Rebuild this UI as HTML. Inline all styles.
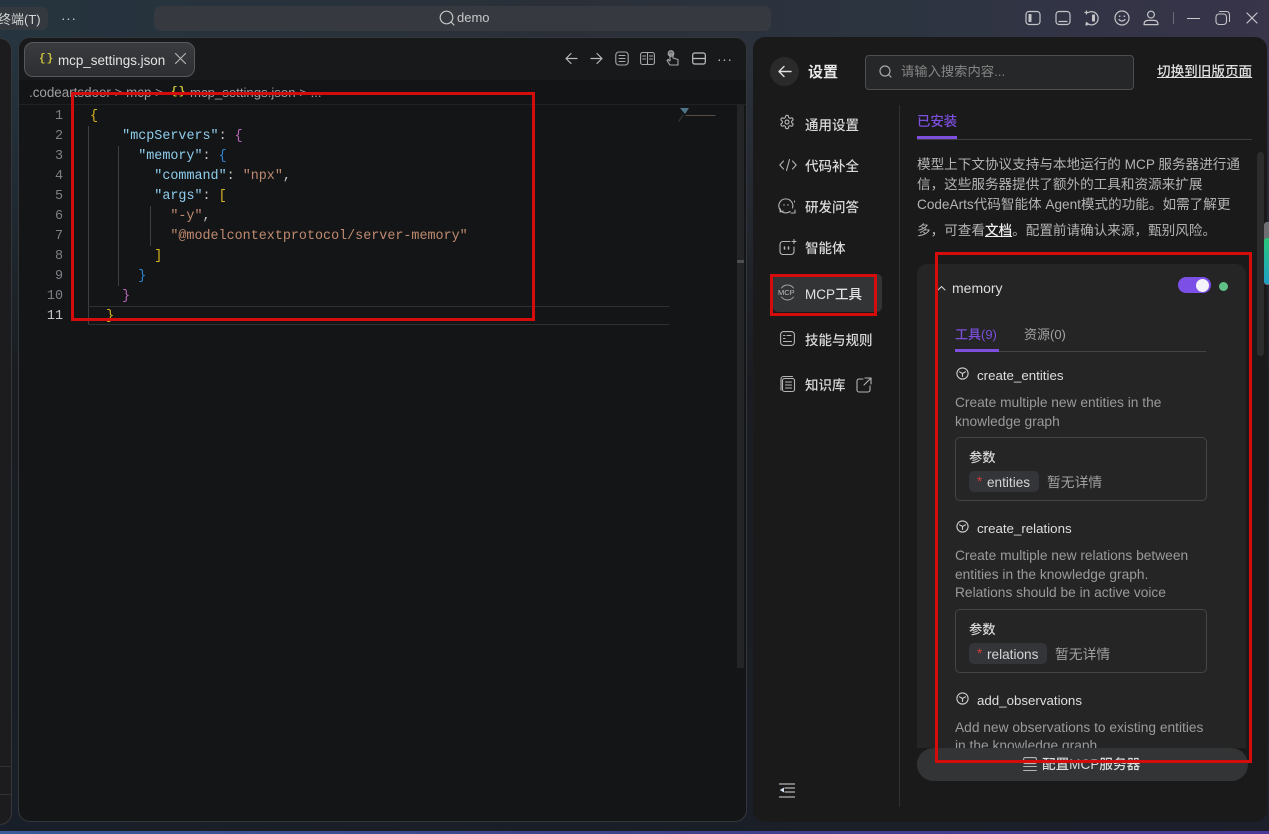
<!DOCTYPE html>
<html lang="zh">
<head>
<meta charset="utf-8">
<title>mcp_settings.json</title>
<style>
html,body{margin:0;padding:0;width:1269px;height:834px;overflow:hidden;background:#1a1c20}
body{position:relative;font-family:"Liberation Sans","Noto Sans CJK SC",sans-serif;color:#d0d0d0}
.a{position:absolute;white-space:nowrap}
svg{position:absolute;overflow:visible;fill:none;stroke-linecap:round;stroke-linejoin:round}
#bg{position:absolute;left:0;top:0;width:1269px;height:834px;background:linear-gradient(180deg,rgba(20,21,24,0) 0%,rgba(20,21,24,0) 6%,rgba(22,23,26,.8) 45%,rgba(22,26,34,.8) 100%),linear-gradient(90deg,#25343f 0%,#2b3038 45%,#2c3440 70%,#38344a 100%)}
#strip{position:absolute;left:0;top:831px;width:1269px;height:3px;background:linear-gradient(90deg,#3a5c98 0%,#3d4488 45%,#4c3a98 100%)}
#leftp{position:absolute;left:-20px;top:38px;width:30px;height:785px;background:#1c1c1e;border:1px solid #33363a;border-radius:12px}
#editor{position:absolute;left:18px;top:37px;width:729px;height:785px;background:#141517;border:1px solid #33363a;border-radius:12px;overflow:hidden;box-sizing:border-box}
#tabbar{position:absolute;left:0;top:0;width:729px;height:42px;background:#18191b}
#crumb{position:absolute;left:0;top:42px;width:729px;height:25px;background:#131416;border-bottom:1px solid #1f2124;box-sizing:border-box}
#tab{position:absolute;left:24px;top:42px;width:169px;height:33px;background:linear-gradient(180deg,#3a3b3e,#2d2e31);border:1px solid #56585b;border-radius:9px}
#set{position:absolute;left:753px;top:37px;width:514px;height:785px;background:#1a1a1b;border-radius:12px;overflow:hidden}
.code{position:absolute;left:90px;font:13.4px/20px "Liberation Mono",monospace;white-space:pre;color:#c4c4c4;margin-top:2px}
.ln{position:absolute;left:30px;width:33px;text-align:right;font:13.4px/20px "Liberation Mono",monospace;color:#7d8084;margin-top:2px}
.k{color:#8fcdec}.s{color:#c08a70}.y{color:#d8b420}.p{color:#b866ba}.b{color:#2f86d0}
.guide{position:absolute;width:1px;background:#3d3f42}
.nav{position:absolute;left:805px;font-size:13.5px;font-weight:500;color:#d8d8d8;line-height:18px;white-space:nowrap;margin-top:1px}
.desc{position:absolute;left:917px;font-size:13.6px;color:#b3b3b3;white-space:nowrap;line-height:20px;margin-top:1px}
.tn{position:absolute;left:977px;font-size:13.3px;color:#dedede;line-height:18px;white-space:nowrap;margin-top:1px}
.td{position:absolute;left:955px;font-size:13.75px;color:#9a9a9a;line-height:18px;white-space:nowrap;margin-top:1px}
.box{position:absolute;left:955px;width:250px;height:62px;border:1px solid #444547;border-radius:5px}
.pl{position:absolute;left:969px;font-size:13.3px;font-weight:500;color:#d5d5d5;line-height:18px;margin-top:1px}
.chip{position:absolute;left:969px;height:21px;background:#343538;border-radius:5px;font-size:13.6px;line-height:23px;color:#d5d5d5;box-sizing:border-box;padding-left:18px}
.chip i{position:absolute;left:8px;top:-1px;font-style:normal;color:#d33c3c}
.none{position:absolute;font-size:13.8px;color:#a0a0a0;line-height:18px;margin-top:1px}
.red{position:absolute;border:3px solid #d40c0c;box-sizing:border-box}
</style>
</head>
<body>
<div id="bg"></div>
<div id="strip"></div>

<!-- top bar -->
<div class="a" style="left:0;top:7px;width:48px;height:23px;background:#33393f;border-radius:0 6px 6px 0"></div>
<div class="a" style="left:-2px;top:10px;font-size:13px;line-height:18px;color:#d5d5d5;margin-top:1px">终端(T)</div>
<div class="a" style="left:61px;top:9px;font-size:14px;line-height:18px;color:#c8c8c8;letter-spacing:.5px">···</div>
<div class="a" style="left:154px;top:6px;width:617px;height:25px;background:#363a40;border-radius:7px"></div>
<svg style="left:439px;top:10px" width="18" height="18" stroke="#c4c4c4" stroke-width="1.2"><circle cx="7.5" cy="7.5" r="6.3"/><path d="M12 12l3 3"/></svg>
<div class="a" style="left:457px;top:9px;font-size:13px;line-height:18px;color:#c8c8c8">demo</div>

<svg style="left:1025px;top:10px" width="16" height="16" stroke="#c4c4c8" stroke-width="1.2"><rect x="1" y="1.5" width="14" height="13" rx="3"/><rect x="3.5" y="4" width="3" height="8" rx=".6" fill="#c4c4c8" stroke="none"/></svg>
<svg style="left:1055px;top:10px" width="16" height="16" stroke="#c4c4c8" stroke-width="1.2"><rect x="1" y="1.5" width="14" height="13" rx="3"/><path d="M4 11.5h8"/></svg>
<svg style="left:1084px;top:10px" width="16" height="16" stroke="#c4c4c8" stroke-width="1.2"><path d="M5 2.2a6.6 6.6 0 1 1-2.5 10.3L2 15l2.6-.8"/><path d="M1 2.5h3M2.5 1v3"/><rect x="8" y="4.5" width="3" height="7" rx=".6" fill="#c4c4c8" stroke="none"/></svg>
<svg style="left:1114px;top:10px" width="16" height="16" stroke="#c4c4c8" stroke-width="1.2"><circle cx="8" cy="8" r="7"/><path d="M5 9.5c1.5 2 4.5 2 6 0"/><circle cx="5.7" cy="6.2" r=".8" fill="#c4c4c8" stroke="none"/><circle cx="10.3" cy="6.2" r=".8" fill="#c4c4c8" stroke="none"/></svg>
<svg style="left:1143px;top:10px" width="16" height="16" stroke="#c4c4c8" stroke-width="1.2"><circle cx="8" cy="4.6" r="3.4"/><path d="M1 14.6c0-3 1.8-4.2 4-4.2h6c2.2 0 4 1.2 4 4.2z"/></svg>
<div class="a" style="left:1173px;top:12px;width:1px;height:12px;background:#6a6c74"></div>
<div class="a" style="left:1187px;top:18px;width:13px;height:1px;background:#c8c8cc"></div>
<svg style="left:1215px;top:10px" width="16" height="16" stroke="#c4c4c8" stroke-width="1.1"><rect x="1" y="4" width="10.5" height="10.5" rx="3"/><path d="M4.5 1.5h7a3 3 0 0 1 3 3v7"/></svg>
<svg style="left:1246px;top:12px" width="12" height="12" stroke="#c8c8cc" stroke-width="1.2"><path d="M1 1l10 10M11 1L1 11"/></svg>

<div id="leftp"></div>
<div class="a" style="left:0;top:766px;width:11px;height:1px;background:#2e3033"></div>
<div class="a" style="left:0;top:794px;width:11px;height:1px;background:#2e3033"></div>

<!-- editor -->
<div id="editor">
  <div id="tabbar"></div>
  <div id="crumb"></div>
</div>
<div id="tab"></div>
<div class="a" style="left:39px;top:52px;font:700 11px/15px 'Liberation Mono',monospace;color:#c8c03a;letter-spacing:1px">{}</div>
<div class="a" style="left:58px;top:52px;font-size:13.4px;line-height:18px;color:#e2e2e2">mcp_settings.json</div>
<svg style="left:175px;top:53px" width="11" height="11" stroke="#b8b8b8" stroke-width="1.1"><path d="M.5.5l10 10M10.5.5l-10 10"/></svg>

<svg style="left:565px;top:52px" width="13" height="13" stroke="#b8b8b8" stroke-width="1.2"><path d="M12 6.5H1M6 1.5l-5 5 5 5"/></svg>
<svg style="left:590px;top:52px" width="13" height="13" stroke="#b8b8b8" stroke-width="1.2"><path d="M1 6.5h11M7 1.5l5 5-5 5"/></svg>
<svg style="left:615px;top:51px" width="14" height="15" stroke="#a8a8a8" stroke-width="1.1"><rect x=".8" y="1" width="12.4" height="13" rx="3"/><path d="M4 4.5h6M4 7.5h6M4 10.5h6"/></svg>
<svg style="left:640px;top:51px" width="15" height="15" stroke="#a8a8a8" stroke-width="1.1"><rect x=".6" y="1.5" width="13.8" height="12" rx="2"/><path d="M7.5 1.5v12M2.8 5h2.7M2.8 8h2.7M9.500 5h3M9.500 8h3"/></svg>
<svg style="left:666px;top:50px" width="14" height="16" stroke="#a8a8a8" stroke-width="1.1"><circle cx="5" cy="3.5" r="2.8" fill="#6b6d70"/><path d="M4 4v7L2 9.500 1 10.500l3 4.500h8V9.500L7 8V4z"/></svg>
<svg style="left:692px;top:52px" width="14" height="13" stroke="#c0c0c0" stroke-width="1.2"><rect x=".7" y="1" width="12.6" height="11" rx="2"/><path d="M1 6.500h12"/></svg>
<div class="a" style="left:717px;top:50px;font-size:14px;line-height:18px;color:#b8b8b8;letter-spacing:.5px">···</div>

<div class="a" style="left:29px;top:84px;font-size:13.4px;line-height:18px;color:#9f9f9f">.codeartsdoer &gt; mcp &gt;</div>
<div class="a" style="left:171px;top:85px;font:700 11px/15px 'Liberation Mono',monospace;color:#c8c03a;letter-spacing:1px">{}</div>
<div class="a" style="left:190px;top:84px;font-size:13.2px;line-height:18px;color:#9f9f9f">mcp_settings.json &gt; ...</div>

<div class="ln" style="top:105px">1</div><div class="ln" style="top:125px">2</div><div class="ln" style="top:145px">3</div><div class="ln" style="top:165px">4</div><div class="ln" style="top:185px">5</div><div class="ln" style="top:205px">6</div><div class="ln" style="top:225px">7</div><div class="ln" style="top:245px">8</div><div class="ln" style="top:265px">9</div><div class="ln" style="top:285px">10</div><div class="ln" style="top:305px;color:#c6c6c6">11</div>

<div class="guide" style="left:88px;top:126px;height:199px"></div>
<div class="guide" style="left:118px;top:146px;height:140px"></div>
<div class="guide" style="left:150px;top:206px;height:40px"></div>
<div class="a" style="left:88px;top:306px;width:581px;height:1px;background:#2e3033"></div>
<div class="a" style="left:88px;top:324px;width:581px;height:1px;background:#2e3033"></div>

<div class="code" style="top:105px"><span class="y">{</span></div>
<div class="code" style="top:125px">    <span class="k">"mcpServers"</span>: <span class="p">{</span></div>
<div class="code" style="top:145px">      <span class="k">"memory"</span>: <span class="b">{</span></div>
<div class="code" style="top:165px">        <span class="k">"command"</span>: <span class="s">"npx"</span>,</div>
<div class="code" style="top:185px">        <span class="k">"args"</span>: <span class="y">[</span></div>
<div class="code" style="top:205px">          <span class="s">"-y"</span>,</div>
<div class="code" style="top:225px">          <span class="s">"@modelcontextprotocol/server-memory"</span></div>
<div class="code" style="top:245px">        <span class="y">]</span></div>
<div class="code" style="top:265px">      <span class="b">}</span></div>
<div class="code" style="top:285px">    <span class="p">}</span></div>
<div class="code" style="top:305px">  <span class="y">}</span></div>

<!-- minimap and scrollbar -->
<svg style="left:676px;top:105px" width="42" height="20" stroke="none"><path d="M4 3h9l-4 6z" fill="#4f7488"/><path d="M10 10.500h29" stroke="#5b4d46" stroke-width="1"/><path d="M7 10l-4 6" stroke="#3a3c3e" stroke-width="1"/></svg>
<div class="a" style="left:737px;top:105px;width:7px;height:563px;background:#242527"></div>
<div class="a" style="left:737px;top:260px;width:7px;height:3px;background:#4d4e50"></div>

<!-- settings -->
<div id="set"></div>
<div class="a" style="left:770px;top:57px;width:29px;height:29px;border-radius:50%;background:#2a2a2b"></div>
<svg style="left:778px;top:65px" width="14" height="13" stroke="#e0e0e0" stroke-width="1.4"><path d="M13 6.500H1M6 1.500l-5 5 5 5"/></svg>
<div class="a" style="left:808px;top:62px;font-size:15px;font-weight:700;line-height:20px;color:#e8e8e8;margin-top:1px">设置</div>
<div class="a" style="left:865px;top:55px;width:267px;height:33px;background:#262728;border:1px solid #4d4e50;border-radius:4px"></div>
<svg style="left:879px;top:65px" width="13" height="13" stroke="#a8a8a8" stroke-width="1.2"><circle cx="6" cy="6" r="5"/><path d="M9.500 9.500l2.500 2.500"/></svg>
<div class="a" style="left:901px;top:63px;font-size:13.3px;line-height:18px;color:#858585">请输入搜索内容...</div>
<div class="a" style="left:1157px;top:63px;font-size:13.6px;font-weight:500;line-height:18px;color:#e0e0e0;text-decoration:underline">切换到旧版页面</div>

<div class="a" style="left:899px;top:105px;width:1px;height:702px;background:#303133"></div>

<!-- nav -->
<svg style="left:779px;top:114px" width="16" height="16" viewBox="0 0 24 24" stroke="#b5b5b5" stroke-width="1.700"><path d="M12.220 2h-.44a2 2 0 0 0-2 2v.18a2 2 0 0 1-1 1.730l-.43.25a2 2 0 0 1-2 0l-.15-.08a2 2 0 0 0-2.730.73l-.22.38a2 2 0 0 0 .73 2.730l.15.1a2 2 0 0 1 1 1.720v.51a2 2 0 0 1-1 1.740l-.15.09a2 2 0 0 0-.73 2.730l.22.38a2 2 0 0 0 2.730.73l.15-.08a2 2 0 0 1 2 0l.43.25a2 2 0 0 1 1 1.730V20a2 2 0 0 0 2 2h.44a2 2 0 0 0 2-2v-.18a2 2 0 0 1 1-1.730l.43-.25a2 2 0 0 1 2 0l.15.08a2 2 0 0 0 2.730-.73l.22-.39a2 2 0 0 0-.73-2.730l-.15-.08a2 2 0 0 1-1-1.740v-.5a2 2 0 0 1 1-1.740l.15-.09a2 2 0 0 0 .73-2.730l-.22-.38a2 2 0 0 0-2.730-.73l-.15.08a2 2 0 0 1-2 0l-.43-.25a2 2 0 0 1-1-1.730V4a2 2 0 0 0-2-2z"/><circle cx="12" cy="12" r="3"/></svg>
<div class="nav" style="top:116px">通用设置</div>
<svg style="left:779px;top:158px" width="18" height="14" stroke="#b5b5b5" stroke-width="1.100"><path d="M4.500 3L.8 7l3.700 4M13.500 3l3.700 4-3.700 4M10.500 1.500L7.500 12.500"/></svg>
<div class="nav" style="top:157px">代码补全</div>
<svg style="left:778px;top:197px" width="19" height="18" stroke="#b5b5b5" stroke-width="1.100"><path d="M14.500 11a7 7 0 1 0-2.500 3.500"/><path d="M2.500 12L2 15l3-1M16.500 4v1M17 13v3h-4"/><circle cx="6" cy="8" r=".7" fill="#b5b5b5" stroke="none"/><circle cx="10" cy="8" r=".7" fill="#b5b5b5" stroke="none"/></svg>
<div class="nav" style="top:198px">研发问答</div>
<svg style="left:779px;top:239px" width="18" height="17" stroke="#b5b5b5" stroke-width="1.100"><path d="M11 2.500H4a3 3 0 0 0-3 3v7a3 3 0 0 0 3 3h8a3 3 0 0 0 3-3V8"/><path d="M15 .5v4M13 2.500h4"/><path d="M5.500 8v2M9.500 8v2" stroke-width="1.500"/></svg>
<div class="nav" style="top:239px">智能体</div>

<div class="a" style="left:773px;top:274px;width:109px;height:38px;background:#333435;border-radius:5px"></div>
<svg style="left:778px;top:283px" width="19" height="19" stroke="#a8a8a8" stroke-width=".9"><path d="M3.500 5a7.500 7.500 0 0 1 12 0M3.500 14a7.500 7.500 0 0 0 12 0"/></svg>
<div class="a" style="left:778px;top:288px;font-size:7.500px;line-height:10px;color:#bdbdbd">MCP</div>
<div class="nav" style="top:285px;color:#e2e2e2">MCP工具</div>
<svg style="left:780px;top:331px" width="15" height="15" stroke="#b5b5b5" stroke-width="1.100"><rect x=".6" y=".6" width="13.800" height="13.800" rx="3"/><path d="M3.500 4.500h1.500M7 4.500h4M3.500 7.500h1.500M3.500 10.500h8"/></svg>
<div class="nav" style="top:331px">技能与规则</div>
<svg style="left:779px;top:375px" width="17" height="18" stroke="#b5b5b5" stroke-width="1.100"><path d="M2 15V4a2.500 2.500 0 0 1 2.500-2.500h9"/><rect x="3.500" y="3.500" width="12" height="13" rx="2"/><path d="M6.500 7h6M6.500 10h6M6.500 13h6"/></svg>
<div class="nav" style="top:376px">知识库</div>
<svg style="left:856px;top:377px" width="16" height="16" stroke="#b5b5b5" stroke-width="1.100"><path d="M7 2H3a2 2 0 0 0-2 2v9a2 2 0 0 0 2 2h9a2 2 0 0 0 2-2V9M9 1h6v6M15 1L8 8"/></svg>
<svg style="left:779px;top:782px" width="17" height="17" stroke="#b5b5b5" stroke-width="1.300"><path d="M.500 2h15M6 6h9.500M6 10h9.500M.500 15h15"/><path d="M5 5.500v5L.800 8z" fill="#d8e0f0" stroke="none"/></svg>

<!-- content -->
<div class="a" style="left:917px;top:113px;font-size:13.400px;font-weight:500;line-height:18px;color:#7c4fdc">已安装</div>
<div class="a" style="left:917px;top:139px;width:335px;height:1px;background:#3c3d3f"></div>
<div class="a" style="left:917px;top:136px;width:40px;height:3px;background:#7c4fdc"></div>

<div class="desc" style="top:154px">模型上下文协议支持与本地运行的 MCP 服务器进行通</div>
<div class="desc" style="top:174px">信，这些服务器提供了额外的工具和资源来扩展</div>
<div class="desc" style="top:194px">CodeArts代码智能体 Agent模式的功能。如需了解更</div>
<div class="desc" style="top:220px">多，可查看<span style="color:#eee;text-decoration:underline;font-weight:500">文档</span>。配置前请确认来源，甄别风险。</div>

<div class="a" style="left:1257px;top:152px;width:7px;height:204px;background:#2d2d2e;border-radius:4px"></div>
<div class="a" style="left:1264px;top:222px;width:5px;height:63px;background:#6d6f72;border-radius:3px 0 0 3px"></div>
<div class="a" style="left:1264px;top:238px;width:5px;height:46px;background:linear-gradient(180deg,#27c77a,#1fa0c8);border-radius:3px 0 0 3px"></div>

<!-- card -->
<div class="a" style="left:917px;top:264px;width:329px;height:484px;background:#252526;border-radius:10px 10px 0 0"></div>
<svg style="left:937px;top:285px" width="9" height="6" stroke="#cfcfcf" stroke-width="1.100"><path d="M1 5l3.500-3.500L8 5"/></svg>
<div class="a" style="left:952px;top:279px;font-size:14px;line-height:18px;color:#dcdcdc">memory</div>
<div class="a" style="left:1178px;top:277px;width:33px;height:16px;background:#7c4fe6;border-radius:8px"></div>
<div class="a" style="left:1196px;top:279px;width:13px;height:13px;background:#f4f2fa;border-radius:50%"></div>
<div class="a" style="left:1219px;top:282px;width:9px;height:9px;background:#5fc088;border-radius:50%"></div>

<div class="a" style="left:955px;top:326px;font-size:13px;font-weight:500;line-height:18px;color:#7c4fdc">工具(9)</div>
<div class="a" style="left:1024px;top:326px;font-size:13px;line-height:18px;color:#a3a3a3">资源(0)</div>
<div class="a" style="left:955px;top:351px;width:251px;height:1px;background:#434446"></div>
<div class="a" style="left:955px;top:349px;width:44px;height:3px;background:#7c4fdc"></div>

<svg style="left:956px;top:367px" width="13" height="13" stroke="#cfcfcf" stroke-width="1.100"><circle cx="6.500" cy="6.500" r="5.600"/><path d="M3.500 4.800l3 1.700 3-1.700M6.500 6.500v3"/></svg>
<div class="tn" style="top:366px">create_entities</div>
<div class="td" style="top:393px">Create multiple new entities in the</div>
<div class="td" style="top:412px">knowledge graph</div>
<div class="box" style="top:437px"></div>
<div class="pl" style="top:448px">参数</div>
<div class="chip" style="top:471px;width:70px"><i>*</i>entities</div>
<div class="none" style="left:1047px;top:473px">暂无详情</div>

<svg style="left:956px;top:520px" width="13" height="13" stroke="#cfcfcf" stroke-width="1.100"><circle cx="6.500" cy="6.500" r="5.600"/><path d="M3.500 4.800l3 1.700 3-1.700M6.500 6.500v3"/></svg>
<div class="tn" style="top:519px">create_relations</div>
<div class="td" style="top:546px">Create multiple new relations between</div>
<div class="td" style="top:565px">entities in the knowledge graph.</div>
<div class="td" style="top:583px">Relations should be in active voice</div>
<div class="box" style="top:609px"></div>
<div class="pl" style="top:620px">参数</div>
<div class="chip" style="top:643px;width:78px"><i>*</i>relations</div>
<div class="none" style="left:1055px;top:645px">暂无详情</div>

<svg style="left:956px;top:692px" width="13" height="13" stroke="#cfcfcf" stroke-width="1.100"><circle cx="6.500" cy="6.500" r="5.600"/><path d="M3.500 4.800l3 1.700 3-1.700M6.500 6.500v3"/></svg>
<div class="tn" style="top:691px">add_observations</div>
<div class="td" style="top:718px">Add new observations to existing entities</div>
<div class="td" style="top:736px">in the knowledge graph</div>

<!-- bottom button -->
<div class="a" style="left:917px;top:748px;width:331px;height:33px;background:#333435;border-radius:17px"></div>
<svg style="left:1023px;top:757px" width="14" height="15" stroke="#b5b5b5" stroke-width="1.100"><rect x=".6" y=".6" width="12.800" height="6" rx="1.500"/><path d="M.6 9.500h12.800M.6 13.500h12.800"/></svg>
<div class="a" style="left:1042px;top:756px;font-size:13.600px;font-weight:500;line-height:18px;color:#dcdcdc">配置MCP服务器</div>

<!-- red annotations -->
<div class="red" style="left:71px;top:92px;width:464px;height:229px"></div>
<div class="red" style="left:770px;top:274px;width:107px;height:42px"></div>
<div class="red" style="left:935px;top:252px;width:317px;height:511px"></div>
</body>
</html>
